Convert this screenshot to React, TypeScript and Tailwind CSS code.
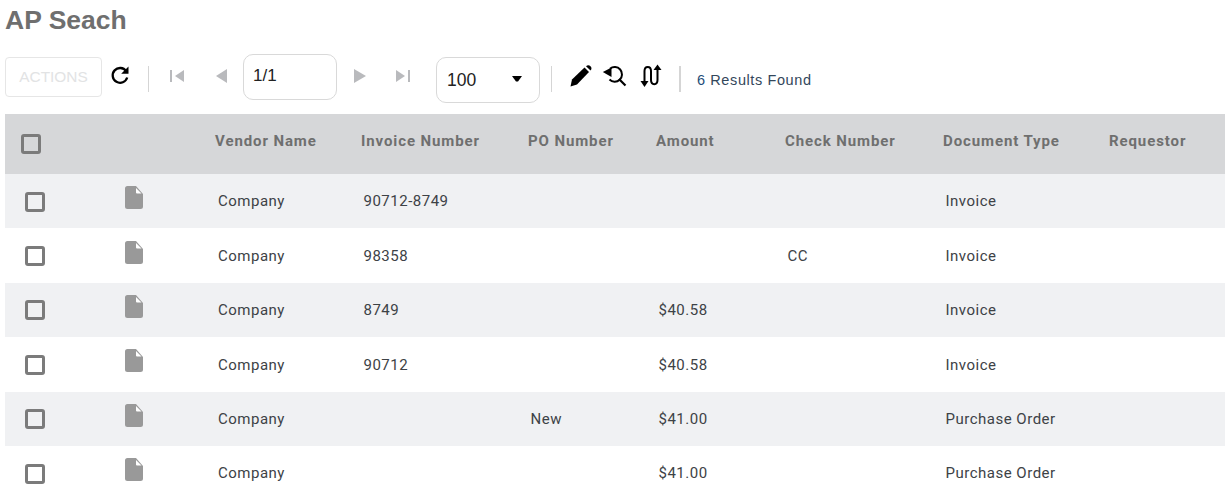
const F = { fontFamily: "Roboto, 'Liberation Sans', sans-serif" };

const cols = "grid grid-cols-[93px_117px_146px_167px_128px_129px_158px_166px_116px]";

const rows = [
  ["90712-8749", "", "", "", "Invoice"],
  ["98358", "", "", "CC", "Invoice"],
  ["8749", "", "$40.58", "", "Invoice"],
  ["90712", "", "$40.58", "", "Invoice"],
  ["", "New", "$41.00", "", "Purchase Order"],
  ["", "", "$41.00", "", "Purchase Order"],
];

const heads = ["Vendor Name", "Invoice Number", "PO Number", "Amount", "Check Number", "Document Type", "Requestor"];

function Box() {
  return <div className="h-[20px] w-[20px] rounded-[3px] border-[3px] border-[#7b7b7b]" />;
}

function Doc() {
  return (
    <svg width="18" height="23" viewBox="0 0 18 23">
      <path
        d="M2.5 0H11L18 8V20.5A2.5 2.5 0 0 1 15.5 23H2.5A2.5 2.5 0 0 1 0 20.5V2.5A2.5 2.5 0 0 1 2.5 0Z"
        fill="#999999"
      />
      <path d="M11 2L11 6.5A1 1 0 0 0 12 7.5L16.5 7.5Z" fill="#ffffff" />
    </svg>
  );
}

function Tri({ dir, bar }: { dir: "l" | "r"; bar?: boolean }) {
  return (
    <svg width="16" height="14" viewBox="0 0 16 14">
      {dir === "l" ? (
        <>
          {bar && <rect x="1" y="1" width="2" height="12" fill="#b9babd" />}
          <path d={bar ? "M15 1V13L6 7Z" : "M14 0V14L3 7Z"} fill="#b9babd" />
        </>
      ) : (
        <>
          {bar && <rect x="13" y="1" width="2" height="12" fill="#b9babd" />}
          <path d={bar ? "M1 1V13L10 7Z" : "M2 0V14L14 7Z"} fill="#b9babd" />
        </>
      )}
    </svg>
  );
}

export default function App() {
  return (
    <div className="h-[502px] w-[1229px] overflow-hidden bg-white" style={F}>
      <h1 className="h-[47px] pl-[5px] pt-[5px] font-['Liberation_Sans',sans-serif] text-[26.5px] leading-[30px] font-bold text-[#6f6f6f]">
        AP Seach
      </h1>

      <div className="mb-[7px] flex h-[60px] items-center pl-[5px]">
        <button className="h-[40px] w-[97px] rounded-[4px] border border-[#e6e6e6] font-['Liberation_Sans',sans-serif] text-[15.4px] text-[#e2e3e4]">
          ACTIONS
        </button>
        <svg className="ml-[8px] mt-[-5px]" width="20" height="20" viewBox="0 0 20 20" fill="none">
          <path d="M16.2 6.2A7.4 7.4 0 1 0 17.2 12.5" stroke="#000" strokeWidth="2.3" />
          <path d="M18.5 1.5V8.8H11.2Z" fill="#000" />
        </svg>
        <div className="ml-[18px] mt-[4px] h-[26px] w-px bg-[#d5d5d5]" />
        <div className="ml-[20px] mt-[-2px] flex w-[16px]"><Tri dir="l" bar /></div>
        <div className="ml-[28px] mt-[-2px] flex w-[16px]"><Tri dir="l" /></div>
        <div className="ml-[14px] flex h-[46px] w-[94px] items-center rounded-[10px] border border-[#d9d9d9] pb-[2px] pl-[9px] font-['Liberation_Sans',sans-serif] text-[17px] text-[#222]">
          1/1
        </div>
        <div className="ml-[15px] mt-[-2px] flex w-[16px]"><Tri dir="r" /></div>
        <div className="ml-[27px] mt-[-2px] flex w-[16px]"><Tri dir="r" bar /></div>
        <div className="ml-[25px] mt-[6px] flex h-[46px] w-[104px] items-center justify-between rounded-[10px] border border-[#d9d9d9] pl-[10px] pr-[17px] font-['Liberation_Sans',sans-serif] text-[17.5px] text-[#222]">
          100
          <svg className="mb-[2px]" width="10" height="6" viewBox="0 0 10 6"><path d="M0 0H10L6 5.5H4Z" fill="#000" /></svg>
        </div>
        <div className="ml-[11px] mt-[4px] h-[26px] w-px bg-[#d5d5d5]" />
        <svg className="ml-[17px] mt-[-2px]" width="24" height="24" viewBox="0 0 24 24">
          <path d="M1.5 22.5L3 15.5L15.5 3.5L20 8L8 20.5Z" fill="#000" />
          <path d="M17 2.2C18.6 .8 20.2 1 21.5 2.2C22.8 3.5 22.8 5 21.5 6.6Z" fill="#000" />
        </svg>
        <svg className="ml-[9px] mt-[-2px]" width="25" height="22" viewBox="0 0 25 22" fill="none">
          <path d="M8 3.8A7.3 7.3 0 1 1 7.5 14.5" stroke="#000" strokeWidth="2" />
          <path d="M0.8 7L9.5 2.5L9.5 12Z" fill="#000" />
          <path d="M17 14L23.5 20.5" stroke="#000" strokeWidth="2.2" />
        </svg>
        <svg className="ml-[13px] mt-[-2px]" width="22" height="24" viewBox="0 0 22 24" fill="none">
          <path d="M4.5 19V7C4.5 1.5 11 1.5 11 7V16C11 21.5 17.5 21.5 17.5 16V4" stroke="#000" strokeWidth="2" />
          <path d="M0.5 17H8.5L4.5 23Z" fill="#000" />
          <path d="M13.5 6H21.5L17.5 0.5Z" fill="#000" />
        </svg>
        <div className="ml-[17px] mt-[4px] h-[26px] w-[2px] bg-[#d5d5d5]" />
        <span className="ml-[16px] mt-[8px] font-['Liberation_Sans',sans-serif] text-[14.5px] tracking-[0.6px] text-[#33475b]">
          <span className="text-[#1f4e79]">6</span> Results Found
        </span>
      </div>

      <div className="ml-[5px] w-[1220px]">
        <div className={`${cols} h-[60px] items-center bg-[#d6d7d9] pb-[6px] text-[15px] font-bold tracking-[0.9px] text-[#6f6f6f]`}>
          <div className="pl-[16px] pt-[6px]"><Box /></div>
          <div />
          {heads.map((h) => (
            <div key={h}>{h}</div>
          ))}
        </div>
        {rows.map((r, i) => (
          <div
            key={i}
            className={`${cols} h-[54.4px] items-center pt-[1px] text-[15px] tracking-[0.5px] text-[#3d4246] ${i % 2 === 0 ? "bg-[#f0f1f3]" : "bg-white"}`}
          >
            <div className="pl-[20px]"><Box /></div>
            <div className="pl-[27px] pb-[8px]"><Doc /></div>
            <div className="pl-[3px]">Company</div>
            {r.map((c, j) => (
              <div key={j} className="pl-[2.5px]">{c}</div>
            ))}
            <div />
          </div>
        ))}
      </div>
    </div>
  );
}
